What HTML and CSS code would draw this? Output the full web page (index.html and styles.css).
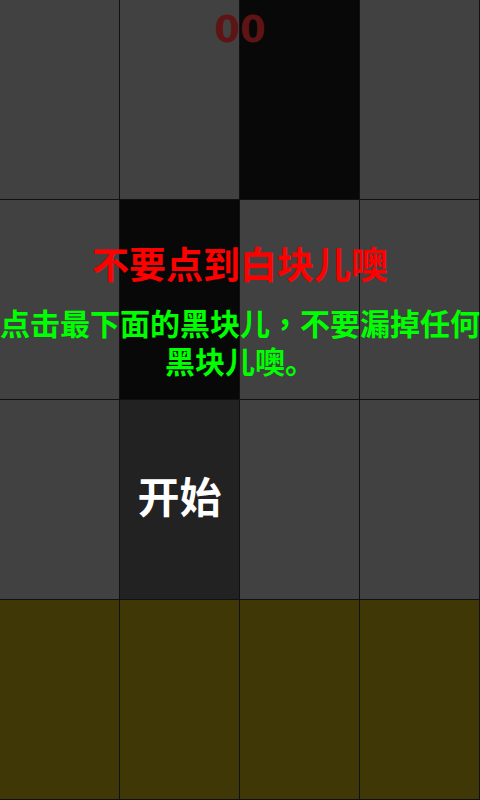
FILE: index.html
```html
<!DOCTYPE html>
<html lang="zh">
<head>
<meta charset="utf-8">
<link rel="stylesheet" href="styles.css">
</head>
<body>
<div class="board">
  <div class="row">
    <div class="cell gray"></div>
    <div class="cell gray"></div>
    <div class="cell black"></div>
    <div class="cell gray"></div>
  </div>
  <div class="row">
    <div class="cell gray"></div>
    <div class="cell black"></div>
    <div class="cell gray"></div>
    <div class="cell gray"></div>
  </div>
  <div class="row">
    <div class="cell gray"></div>
    <div class="cell dark"><span class="start">开始</span></div>
    <div class="cell gray"></div>
    <div class="cell gray"></div>
  </div>
  <div class="row">
    <div class="cell olive"></div>
    <div class="cell olive"></div>
    <div class="cell olive"></div>
    <div class="cell olive"></div>
  </div>
  <div class="overlay">
    <div class="score">00</div>
    <div class="title">不要点到白块儿噢</div>
    <div class="tip">点击最下面的黑块儿<span class="comma" lang="zh-Hant">，</span>不要漏掉任何黑块儿噢。</div>
  </div>
</div>
</body>
</html>
```
FILE: styles.css
```css
html, body {
  margin: 0;
  padding: 0;
  background: #111;
}
.board {
  position: relative;
  width: 480px;
  height: 800px;
  display: flex;
  flex-direction: column;
  overflow: hidden;
  font-family: "Noto Sans CJK SC", "DejaVu Sans", sans-serif;
}
.row {
  display: flex;
  height: 200px;
}
.cell {
  width: 120px;
  height: 200px;
  box-sizing: border-box;
  border-right: 1px solid #111;
  border-bottom: 1px solid #111;
  display: flex;
  align-items: center;
  justify-content: center;
}
.gray { background: #414141; }
.black { background: #080808; }
.dark { background: #222222; }
.olive { background: #3f3806; }
.start {
  color: #ffffff;
  font-size: 42px;
  font-weight: 600;
  line-height: 1;
  margin-top: -10px;
}
.overlay {
  position: absolute;
  left: 0;
  top: 0;
  width: 480px;
  display: flex;
  flex-direction: column;
  align-items: center;
  text-align: center;
}
.score {
  margin-top: 8px;
  font-family: "DejaVu Sans", sans-serif;
  font-weight: bold;
  font-size: 37px;
  line-height: 44px;
  color: #5e1414;
}
.title {
  margin-top: 191px;
  color: #ff0000;
  font-size: 37px;
  line-height: 40px;
  font-weight: 700;
}
.tip {
  margin-top: 20px;
  color: #00ff00;
  font-size: 30px;
  line-height: 38px;
  font-weight: 700;
  width: 480px;
}
.comma {
  font-family: "Noto Sans CJK TC", "Noto Sans CJK SC", sans-serif;
}
```
